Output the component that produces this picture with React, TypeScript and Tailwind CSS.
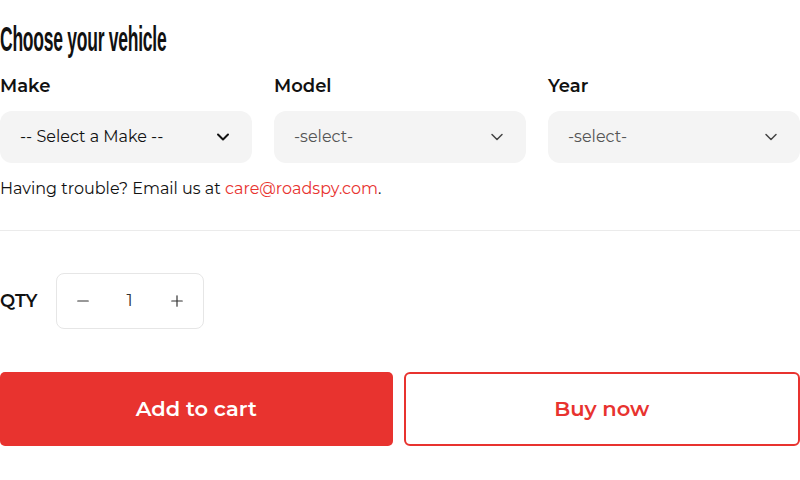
import React from "react";
import { ChevronDown, Minus, Plus } from "lucide-react";

const selects = [
  { label: "Make", value: "-- Select a Make --", dark: true },
  { label: "Model", value: "-select-", dark: false },
  { label: "Year", value: "-select-", dark: false },
];

const App = () => {
  return (
    <div className="w-[800px] h-[480px] bg-white text-[#111] font-['Montserrat','DejaVu_Sans',sans-serif] overflow-hidden">
      <h2 className="pt-[20px] text-[35px] leading-[38px] font-bold tracking-[-0.5px] font-['Liberation_Sans_Narrow','Liberation_Sans',sans-serif] scale-x-[0.5] origin-left whitespace-nowrap">
        Choose your vehicle
      </h2>

      <div className="mt-[17px] grid grid-cols-3 gap-x-[22px]">
        {selects.map((s) => (
          <div key={s.label} className="flex flex-col">
            <label className="text-[18px] leading-[22px] font-semibold">
              {s.label}
            </label>
            <div className="mt-[14px] h-[52px] rounded-[12px] bg-[#f4f4f4] flex items-center justify-between pl-[20px] pr-[19px]">
              <span
                className={
                  s.dark
                    ? "text-[16px] text-[#111]"
                    : "text-[16px] text-[#555]"
                }
              >
                {s.value}
              </span>
              <ChevronDown
                size={20}
                strokeWidth={s.dark ? 2.4 : 1.8}
                className={s.dark ? "text-[#111]" : "text-[#444]"}
              />
            </div>
          </div>
        ))}
      </div>

      <p className="mt-[15px] text-[16px] leading-[22px]">
        Having trouble? Email us at{" "}
        <a className="text-[#e8332f]">care@roadspy.com</a>.
      </p>

      <div className="mt-[30px] border-t border-[#ebebeb]" />

      <div className="mt-[42px] flex items-center gap-[18px]">
        <span className="text-[18px] font-semibold">QTY</span>
        <div className="w-[148px] h-[56px] rounded-[8px] border border-[#e6e6e6] flex items-center justify-between px-[17px] text-[#333]">
          <Minus size={18} strokeWidth={1.6} />
          <span className="text-[17px]">1</span>
          <Plus size={18} strokeWidth={1.6} />
        </div>
      </div>

      <div className="mt-[43px] flex gap-[11px]">
        <button className="flex-1 h-[74px] rounded-[5px] bg-[#e8332f] text-white text-[21px] font-semibold">
          Add to cart
        </button>
        <button className="flex-1 h-[74px] rounded-[6px] border-2 border-[#e8332f] text-[#e8332f] text-[21px] font-semibold">
          Buy now
        </button>
      </div>
    </div>
  );
};

export default App;
